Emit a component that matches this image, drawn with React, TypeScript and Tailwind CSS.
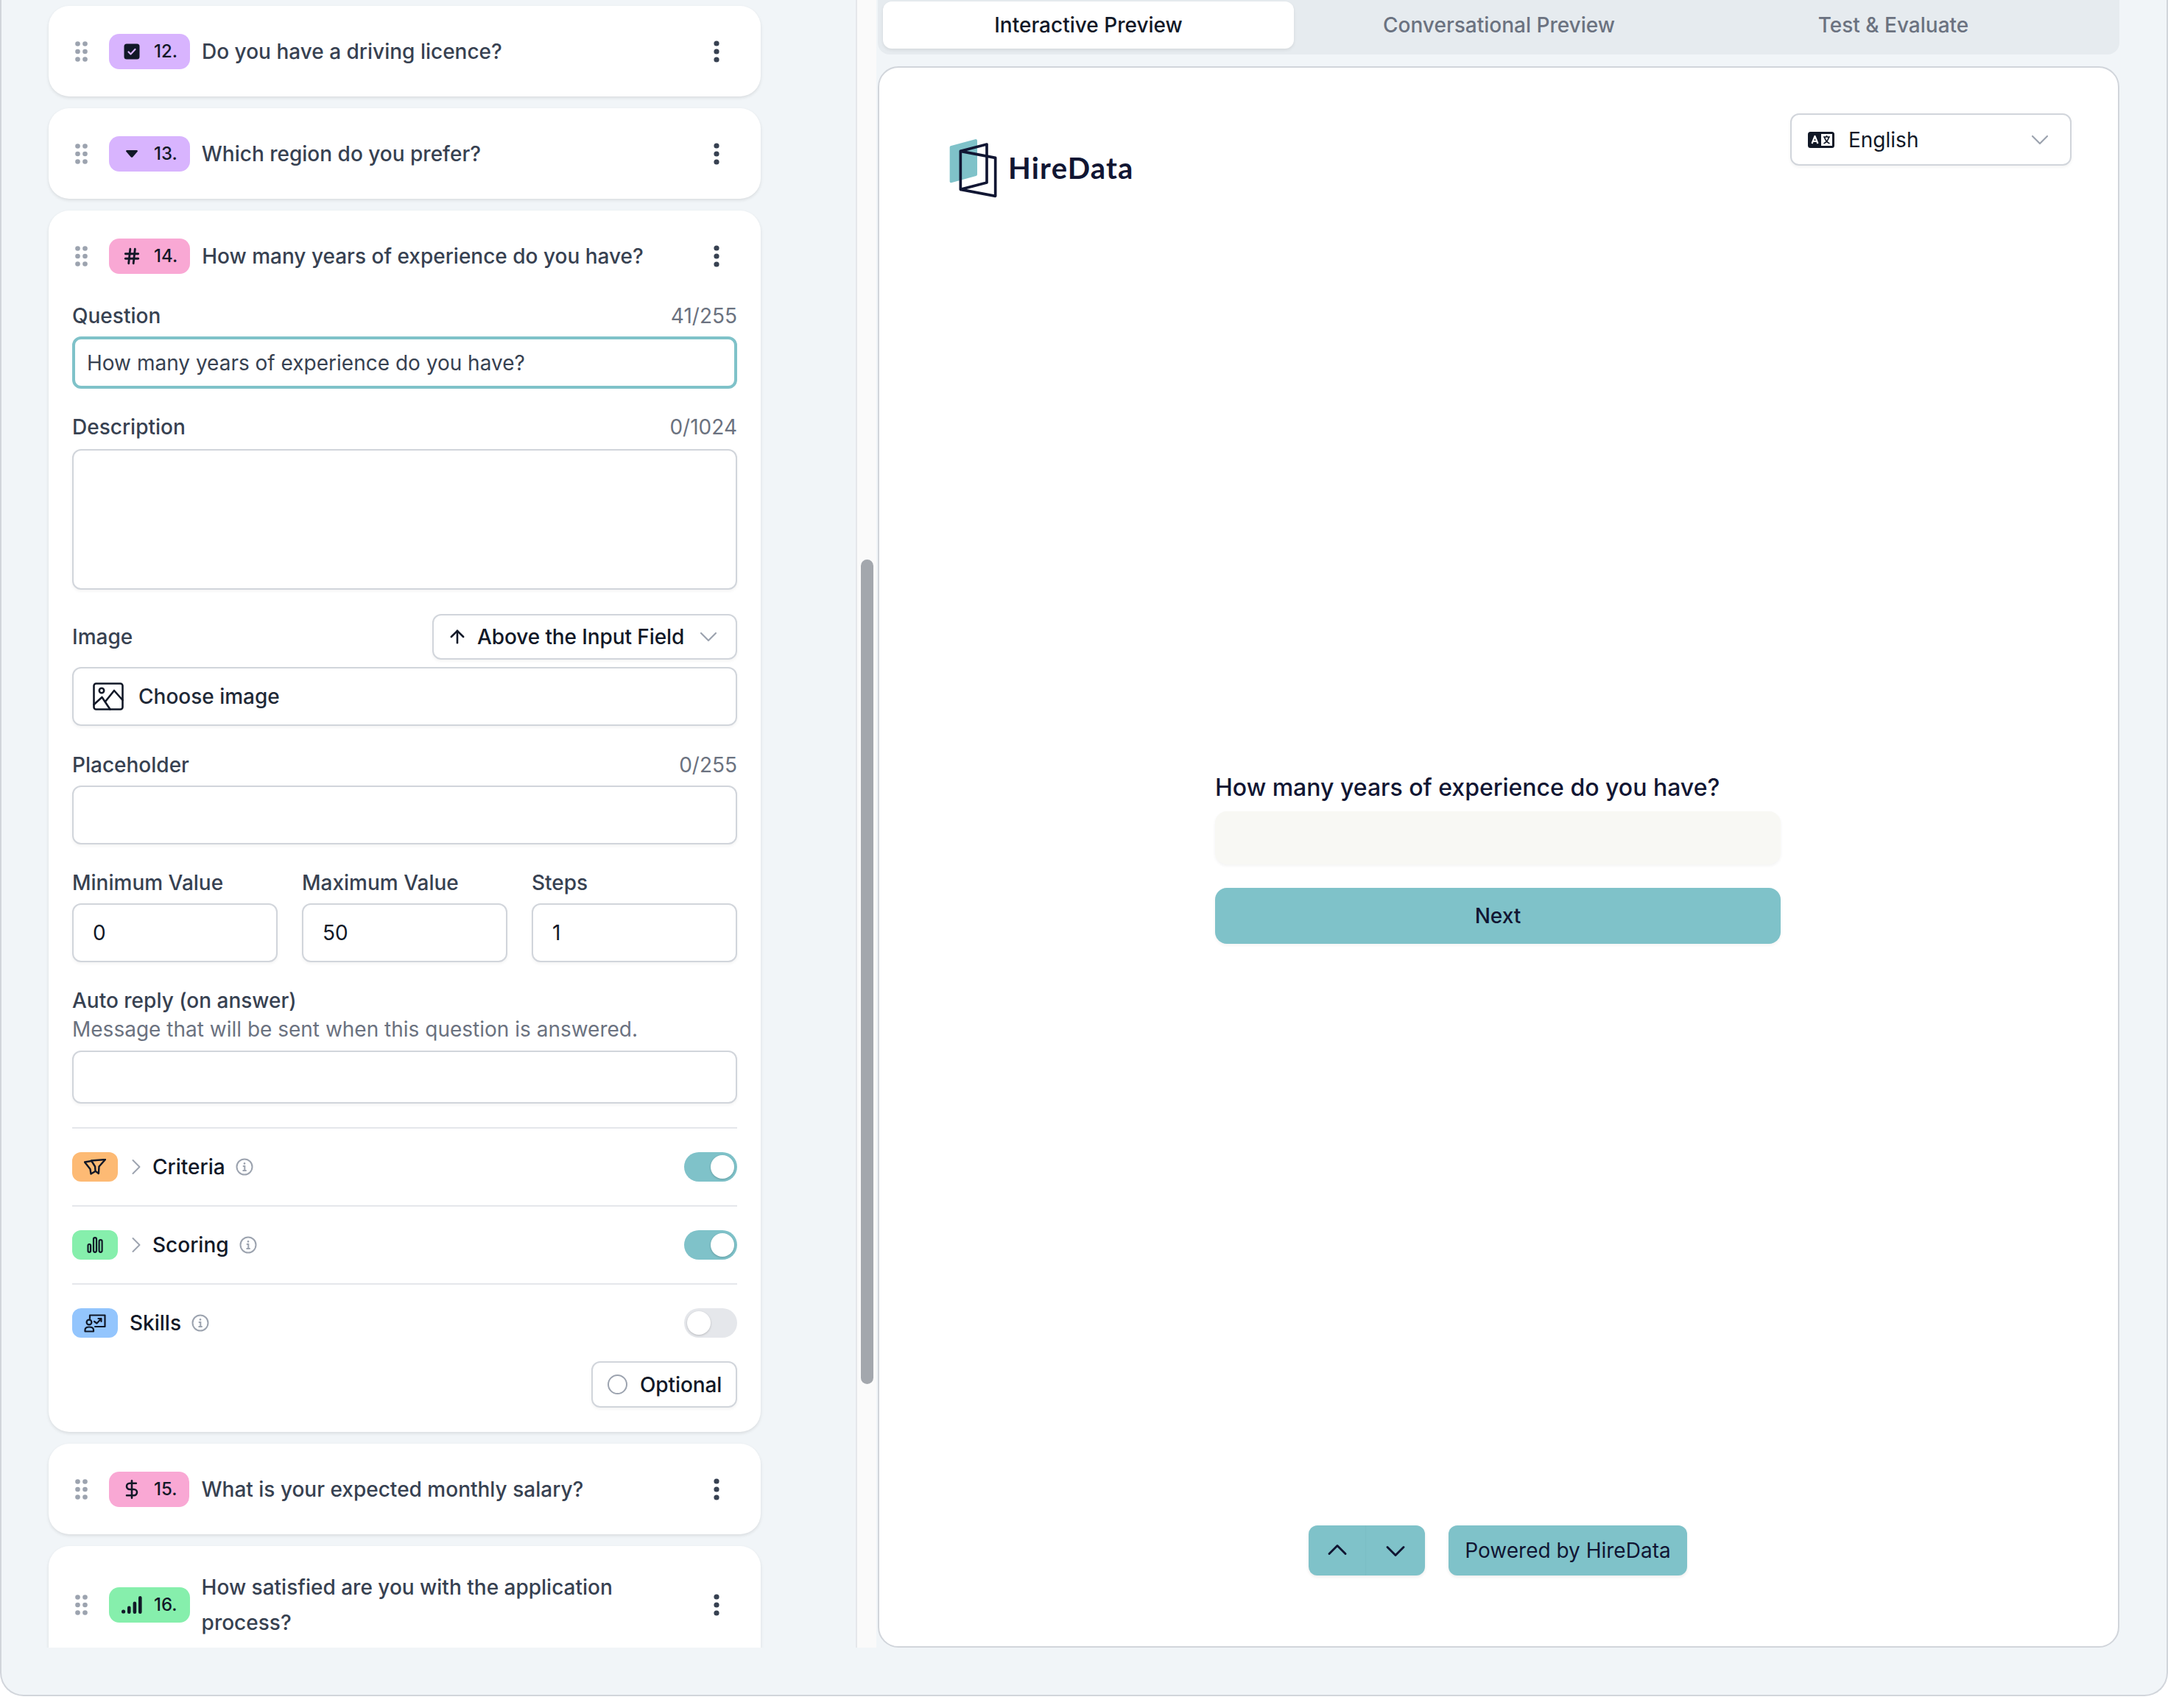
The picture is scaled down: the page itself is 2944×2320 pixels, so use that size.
import { ArrowUp, ChevronDown, ChevronRight, ChevronUp, DollarSign, Hash } from 'lucide-react';
import type { ReactNode } from 'react';

const DragDots = () => (
  <svg width="17" height="28" viewBox="0 0 17 28" className="shrink-0 ml-1 mr-[29px]" fill="#9ca3af">
    <circle cx="3.5" cy="3.5" r="3.3" />
    <circle cx="13.5" cy="3.5" r="3.3" />
    <circle cx="3.5" cy="14" r="3.3" />
    <circle cx="13.5" cy="14" r="3.3" />
    <circle cx="3.5" cy="24.5" r="3.3" />
    <circle cx="13.5" cy="24.5" r="3.3" />
  </svg>
);

const Kebab = () => (
  <svg width="8" height="30" viewBox="0 0 8 30" className="shrink-0 ml-auto mr-6" fill="#374151">
    <circle cx="4" cy="4" r="3.6" />
    <circle cx="4" cy="15" r="3.6" />
    <circle cx="4" cy="26" r="3.6" />
  </svg>
);

const CheckIcon = () => (
  <svg width="22" height="22" viewBox="0 0 22 22">
    <rect width="21" height="21" x="0.5" y="0.5" rx="3.5" fill="#111827" />
    <path d="M6.5 11.5l3 3 6-6.5" fill="none" stroke="#d8b4fe" strokeWidth="2.2" strokeLinecap="round" strokeLinejoin="round" />
  </svg>
);

const CaretIcon = () => (
  <svg width="16" height="10" viewBox="0 0 16 10">
    <path d="M1.4 0h13.2c1.1 0 1.7 1.2 1 2l-6.3 7.2c-.7.8-1.9.8-2.6 0L.4 2c-.7-.8-.1-2 1-2z" fill="#111827" />
  </svg>
);

const SignalIcon = () => (
  <svg width="28" height="24" viewBox="0 0 28 24" fill="#111827">
    <circle cx="2.6" cy="21" r="2.6" />
    <rect x="8" y="13.5" width="4.6" height="10.5" rx="2.3" />
    <rect x="15.6" y="7.5" width="4.6" height="16.5" rx="2.3" />
    <rect x="23" y="0" width="4.6" height="24" rx="2.3" />
  </svg>
);

const Badge = ({ color, icon, num }: { color: string; icon: ReactNode; num: string }) => (
  <div className={`shrink-0 h-12 rounded-[14px] pl-4 pr-[17px] flex items-center text-[24px] leading-8 font-medium text-[#111827] ${color}`}>
    <span className="w-[30px] flex items-center justify-center">{icon}</span>
    <span className="ml-[15px]">{num}</span>
  </div>
);

const QuestionRow = ({ color, icon, num, title }: { color: string; icon: ReactNode; num: string; title: string }) => (
  <div className="flex items-center min-h-[61px]">
    <DragDots />
    <Badge color={color} icon={icon} num={num} />
    <div className="ml-4 w-[650px] shrink-0 text-[28px] leading-[48px] font-medium text-[#374151]">{title}</div>
    <Kebab />
  </div>
);

const FieldLabel = ({ label, count, className }: { label: string; count?: string; className: string }) => (
  <div className={`flex justify-between h-10 text-[28px] leading-10 ${className}`}>
    <span className="font-medium text-[#374151]">{label}</span>
    {count && <span className="text-[#6b7280]">{count}</span>}
  </div>
);

const fieldClass =
  'block w-full border-2 border-[#d1d5db] rounded-xl bg-white shadow-[0_2px_4px_rgba(0,0,0,0.05)] text-[28px] outline-none';

const ImageIcon = () => (
  <svg width="42" height="38" viewBox="0 0 42 38" fill="none" stroke="#111827" strokeWidth="2.6" strokeLinecap="round" strokeLinejoin="round">
    <rect x="1.5" y="1.5" width="39" height="35" rx="3" />
    <circle cx="12" cy="11" r="3.2" />
    <path d="M1.5 30l11-10 11 16.5" />
    <path d="M17 26l12-15 11.5 13" />
  </svg>
);

const InfoIcon = () => (
  <svg width="24" height="24" viewBox="0 0 24 24" fill="none" stroke="#9ca3af" strokeWidth="2" className="shrink-0">
    <circle cx="12" cy="12" r="10.5" />
    <path d="M9.8 11h2.5v6M9.5 17h5.2" />
    <circle cx="12" cy="7.4" r="1.3" fill="#9ca3af" stroke="none" />
  </svg>
);

const FunnelIcon = () => (
  <svg width="30" height="22" viewBox="0 0 30 22" fill="none" stroke="#111827" strokeWidth="2.4" strokeLinejoin="round" strokeLinecap="round">
    <path d="M10 2.5l19-1.5-8.5 9.5-.6 9.5-4.4-3.4-.4-6.1z" />
    <path d="M10 3L1 4.5l7.5 9.5 1 6.5 5.5-3.3" />
  </svg>
);

const BarsIcon = () => (
  <svg width="22" height="22" viewBox="0 0 22 22" fill="none" stroke="#111827" strokeWidth="2.2">
    <rect x="1.5" y="10" width="3.6" height="10.8" rx="1.8" />
    <rect x="9" y="1.2" width="4" height="19.6" rx="2" />
    <rect x="16.6" y="4.2" width="4" height="16.6" rx="2" />
  </svg>
);

const SkillsIcon = () => (
  <svg width="30" height="25" viewBox="0 0 30 25" fill="none" stroke="#111827" strokeWidth="2.2" strokeLinecap="round" strokeLinejoin="round">
    <path d="M8 6V1.5h20.5v15.5H15" />
    <path d="M14 10l3.5 2.5 6-6.5M19.5 6h4v4" />
    <circle cx="7" cy="11" r="3.4" />
    <path d="M1.5 23.5v-2c0-2.5 2-4 5.5-4s6 1.5 6 4v2z" />
  </svg>
);

const Toggle = ({ on }: { on?: boolean }) => (
  <div className={`ml-auto w-[72px] h-10 rounded-full flex items-center px-1 ${on ? 'bg-[#7fc2c9] justify-end' : 'bg-[#e5e7eb] justify-start'}`}>
    <div className="w-8 h-8 rounded-full bg-white shadow-[0_1px_3px_rgba(0,0,0,0.2)]" />
  </div>
);

const SettingRow = ({ pill, icon, label, chevron, on }: { pill: string; icon: ReactNode; label: string; chevron?: boolean; on?: boolean }) => (
  <div className="h-[104px] flex items-center">
    <div className={`w-[62px] h-10 rounded-xl flex items-center justify-center ${pill}`}>{icon}</div>
    {chevron ? <ChevronRight className="ml-[7px] mr-[4px] text-[#9ca3af]" size={36} strokeWidth={1.3} /> : <div className="w-4" />}
    <span className="text-[28px] leading-10 font-medium text-[#111827]">{label}</span>
    <span className="ml-[14px]"><InfoIcon /></span>
    <Toggle on={on} />
  </div>
);

const LangIcon = () => (
  <svg width="36" height="22" viewBox="0 0 36 22">
    <rect width="36" height="22" rx="3.5" fill="#111827" />
    <rect x="18" y="3" width="15" height="16" fill="#fff" />
    <path d="M5.5 16l4-10 4 10M7 13h5" fill="none" stroke="#fff" strokeWidth="2.2" strokeLinejoin="round" />
    <path d="M21 7h9M25.5 5v2M22.5 7c1 4.5 3.5 7.5 7 9M28.5 7c-1 4.5-3.5 7.5-7 9" fill="none" stroke="#111827" strokeWidth="1.7" />
  </svg>
);

const Logo = () => (
  <svg width="70" height="84" viewBox="80 50 210 250" fill="none" className="shrink-0">
    <path d="M94 85l100-27a6 6 0 0 1 6 5v139a6 6 0 0 1-5 6L94 236a6 6 0 0 1-6-5V90a6 6 0 0 1 6-5z" fill="#7fc2c9" />
    <g stroke="#111633" strokeWidth="11" strokeLinejoin="round">
      <path d="M132 107l107-28v156l-107 28z" />
      <path d="M132 107l142 27v156l-142-27" />
    </g>
  </svg>
);

export default function App() {
  return (
    <div className="w-[2944px] h-[2320px] bg-white font-['Inter',sans-serif]">
      <div className="w-[2944px] h-[2304px] flex overflow-hidden bg-[#f1f5f8] border-2 border-t-0 border-[#d1d5db] rounded-b-[32px]">
        {/* question list */}
        <div className="w-[1160px] h-[2238px] shrink-0 overflow-hidden pl-16 pt-2">
          <div className="w-[967px] flex flex-col gap-4">
            <div className="bg-white rounded-[28px] px-8 py-[31px] shadow-[0_2px_4px_rgba(0,0,0,0.1)]">
              <QuestionRow color="bg-[#d8b4fe]" icon={<CheckIcon />} num="12." title="Do you have a driving licence?" />
            </div>
            <div className="bg-white rounded-[28px] px-8 py-[31px] shadow-[0_2px_4px_rgba(0,0,0,0.1)]">
              <QuestionRow color="bg-[#d8b4fe]" icon={<CaretIcon />} num="13." title="Which region do you prefer?" />
            </div>

            <div className="bg-white rounded-[28px] px-8 pt-[31px] pb-[33px] shadow-[0_2px_4px_rgba(0,0,0,0.1)]">
              <QuestionRow color="bg-[#f9a8d4]" icon={<Hash size={26} strokeWidth={2.6} color="#111827" />} num="14." title="How many years of experience do you have?" />

              <FieldLabel className="mt-[31px]" label="Question" count="41/255" />
              <input readOnly defaultValue="How many years of experience do you have?" className="mt-2 block w-full h-[71px] border-4 border-[#7fc2c9] rounded-xl px-4 text-[28px] text-[#374151] outline-none" />

              <FieldLabel className="mt-8" label="Description" count="0/1024" />
              <textarea readOnly className={`${fieldClass} mt-[10px] h-[191px] resize-none`} />

              <div className="mt-[33px] flex items-center justify-between h-[62px]">
                <span className="text-[28px] font-medium text-[#374151]">Image</span>
                <div className="w-[414px] h-[62px] border-2 border-[#d1d5db] rounded-xl flex items-center pl-[18px] shadow-[0_2px_4px_rgba(0,0,0,0.05)]">
                  <ArrowUp size={28} strokeWidth={2.2} color="#111827" />
                  <span className="ml-[13px] text-[28px] tracking-[-0.1px] font-medium text-[#111827]">Above the Input Field</span>
                  <ChevronDown className="ml-auto mr-[17px]" size={40} strokeWidth={1.3} color="#9ca3af" />
                </div>
              </div>

              <div className="mt-[10px] h-20 border-2 border-[#d1d5db] rounded-xl flex items-center pl-[26px] shadow-[0_2px_4px_rgba(0,0,0,0.05)]">
                <ImageIcon />
                <span className="ml-5 text-[28px] font-medium text-[#1f2937]">Choose image</span>
              </div>

              <FieldLabel className="mt-[33px]" label="Placeholder" count="0/255" />
              <input readOnly className={`${fieldClass} mt-2 h-20`} />

              <div className="mt-8 grid grid-cols-3 gap-x-[33px]">
                {[
                  ['Minimum Value', '0'],
                  ['Maximum Value', '50'],
                  ['Steps', '1'],
                ].map(([label, val]) => (
                  <div key={label}>
                    <FieldLabel className="" label={label} />
                    <input readOnly defaultValue={val} className={`${fieldClass} mt-2 h-20 px-[26px] text-[#111827]`} />
                  </div>
                ))}
              </div>

              <div className="mt-8 text-[28px] leading-10 font-medium text-[#374151]">Auto reply (on answer)</div>
              <div className="-mt-[1px] text-[28px] leading-10 text-[#6b7280]">Message that will be sent when this question is answered.</div>
              <input readOnly className={`${fieldClass} mt-[9px] h-[72px]`} />

              <div className="mt-8 border-t-2 border-[#e5e7eb]">
                <SettingRow pill="bg-[#fdba74]" icon={<FunnelIcon />} label="Criteria" chevron on />
              </div>
              <div className="border-t-2 border-[#e5e7eb]">
                <SettingRow pill="bg-[#86efac]" icon={<BarsIcon />} label="Scoring" chevron on />
              </div>
              <div className="border-t-2 border-[#e5e7eb]">
                <SettingRow pill="bg-[#93c5fd]" icon={<SkillsIcon />} label="Skills" />
              </div>

              <div className="flex justify-end">
                <div className="w-[198px] h-[63px] border-2 border-[#d1d5db] rounded-xl flex items-center pl-5 shadow-[0_2px_4px_rgba(0,0,0,0.05)]">
                  <div className="w-[27px] h-[27px] rounded-full border-2 border-[#9ca3af]" />
                  <span className="ml-[17px] text-[28px] tracking-[-0.1px] font-medium text-[#111827]">Optional</span>
                </div>
              </div>
            </div>

            <div className="bg-white rounded-[28px] px-8 py-[31px] shadow-[0_2px_4px_rgba(0,0,0,0.1)]">
              <QuestionRow color="bg-[#f9a8d4]" icon={<DollarSign size={28} strokeWidth={2.2} color="#111827" />} num="15." title="What is your expected monthly salary?" />
            </div>
            <div className="bg-white rounded-t-[28px] px-8 pt-8 pb-[31px] shadow-[0_2px_4px_rgba(0,0,0,0.1)]">
              <QuestionRow color="bg-[#86efac]" icon={<SignalIcon />} num="16." title="How satisfied are you with the application process?" />
            </div>
          </div>
        </div>

        {/* scrollbar */}
        <div className="w-7 h-[2238px] shrink-0 bg-[#fafafa] border-l-2 border-[#e5e7eb] pl-[5px] pt-[760px]">
          <div className="w-[17px] h-[1120px] rounded-full bg-[#a3a7ad]" />
        </div>

        {/* preview */}
        <div className="w-[1686px] ml-[2px] shrink-0">
          <div className="h-[74px] bg-[#e6ebef] rounded-b-2xl flex pl-[7px] pt-[2px] text-[28px] leading-[64px] font-medium text-center">
            <div className="w-[558px] h-16 bg-white rounded-xl text-[#111827] shadow-[0_2px_4px_rgba(0,0,0,0.08)]">Interactive Preview</div>
            <div className="w-[557px] h-16 text-[#6b7280]">Conversational Preview</div>
            <div className="w-[514px] h-16 text-[#6b7280]">Test &amp; Evaluate</div>
          </div>

          <div className="mt-4 h-[2148px] bg-white border-2 border-[#d1d5db] rounded-[28px] flex flex-col">
            <div className="flex justify-between items-start pl-[93px] pr-[63px] pt-[62px] h-[178px]">
              <div className="mt-8 flex items-center">
                <Logo />
                <span className="ml-3 font-['Lato',sans-serif] font-bold text-[40px] leading-none tracking-[1.2px] text-[#111633]">HireData</span>
              </div>
              <div className="w-[382px] h-[71px] border-2 border-[#d1d5db] rounded-xl flex items-center pl-[22px] shadow-[0_2px_4px_rgba(0,0,0,0.05)]">
                <LangIcon />
                <span className="ml-[19px] text-[28px] text-[#111827]">English</span>
                <ChevronDown className="ml-auto mr-[21px]" size={40} strokeWidth={1.3} color="#9ca3af" />
              </div>
            </div>

            <div className="mt-[780px] flex flex-col items-center">
              <div className="w-[768px] -ml-[2px]">
                <div className="text-[32px] leading-10 font-medium text-[#111633]">How many years of experience do you have?</div>
                <div className="mt-3 h-[72px] rounded-2xl bg-[#f8f8f4] shadow-[0_2px_4px_rgba(0,0,0,0.05)]" />
                <div className="mt-8 h-[76px] rounded-2xl bg-[#7fc2c9] text-center text-[28px] leading-[76px] font-medium text-[#111633] shadow-[0_2px_4px_rgba(0,0,0,0.05)]">Next</div>
              </div>

              <div className="mt-[790px] -ml-[2px] flex gap-8">
                <div className="w-[158px] h-[68px] rounded-xl bg-[#7fc2c9] flex shadow-[0_2px_4px_rgba(0,0,0,0.08)]">
                  <div className="w-[78px] flex items-center justify-center border-r border-[#7bbdc4]">
                    <ChevronUp className="-mt-[2px]" size={44} strokeWidth={1.6} color="#111633" />
                  </div>
                  <div className="flex-1 flex items-center justify-center">
                    <ChevronDown className="mt-[2px]" size={44} strokeWidth={1.6} color="#111633" />
                  </div>
                </div>
                <div className="h-[68px] rounded-xl bg-[#7fc2c9] px-[22px] text-[28px] leading-[68px] text-[#111633] shadow-[0_2px_4px_rgba(0,0,0,0.08)]">Powered by HireData</div>
              </div>
            </div>
          </div>
        </div>
      </div>
    </div>
  );
}
